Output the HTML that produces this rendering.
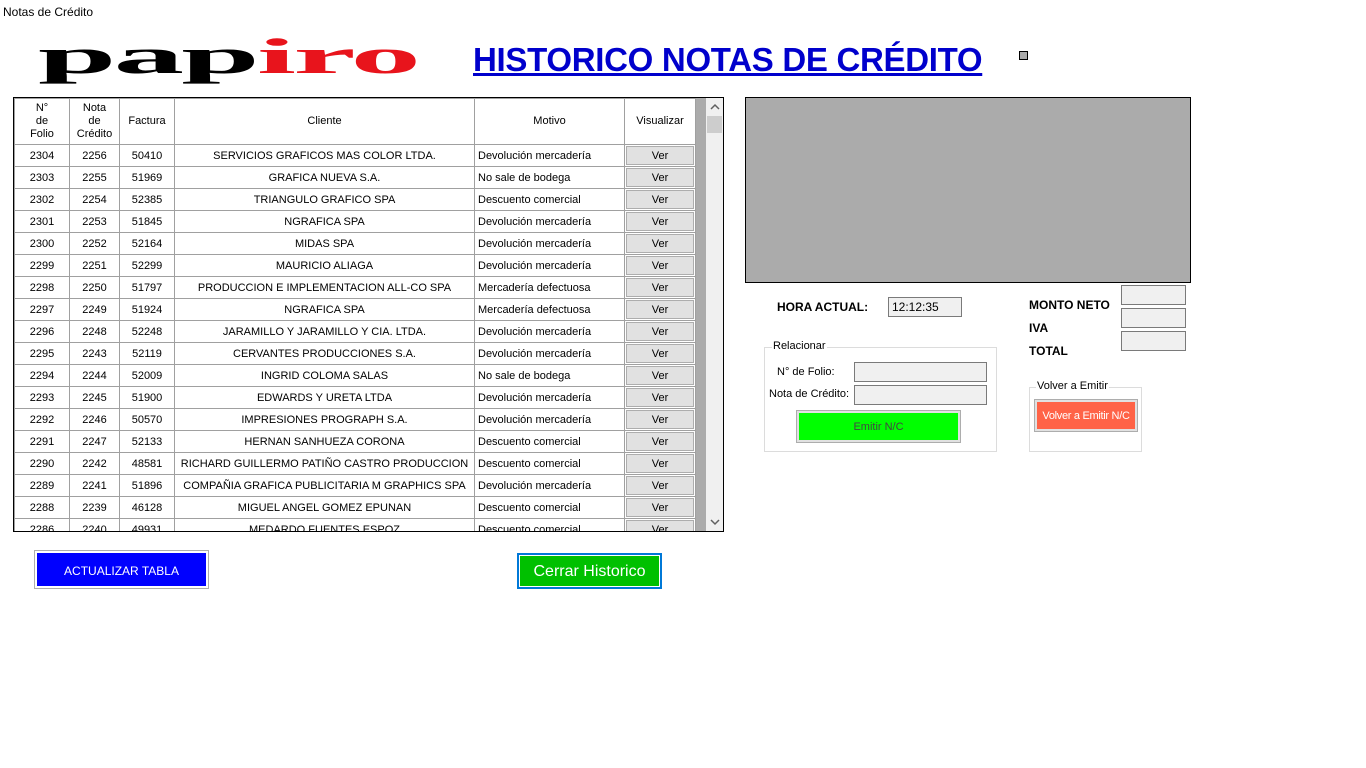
<!DOCTYPE html>
<html><head><meta charset="utf-8"><style>
body{margin:0;width:1366px;height:768px;background:#fff;position:relative;overflow:hidden;font-family:"Liberation Sans",sans-serif;font-size:11px;color:#000}
.a{position:absolute}
#grid{left:13px;top:97px;width:709px;height:433px;border:1px solid #000;overflow:hidden;background:#ababab}
table{border-collapse:collapse;position:absolute;left:0;top:0;table-layout:fixed;background:#fff}
td{border:1px solid #a0a0a0;height:20px;padding:1px 0 0 0;text-align:center;white-space:nowrap;overflow:hidden;font-size:11px;line-height:20px}
td.m{text-align:left;padding-left:3px}
td.b{padding-top:0;line-height:21px;height:21px}
th{border:1px solid #a0a0a0;font-weight:normal;height:45px;padding:0;font-size:11px;line-height:13px;background:#fff}
.v{display:block;margin:0 1px;height:17px;line-height:18px;background:#e1e1e1;border:1px solid #adadad}
.lbl{font-weight:bold;font-size:12px}
.tb{background:#f0f0f0;border:1px solid #7a7a7a;box-sizing:border-box}
.gb{border:1px solid #dcdcdc;box-sizing:border-box}
.gt{position:absolute;top:-8px;background:#fff;padding:0 1px;font-size:11px}
</style></head><body>
<div class="a" style="left:3px;top:5px;font-size:12px">Notas de Crédito</div>
<div class="a" style="left:38px;top:31px;font-family:'Liberation Serif',serif;font-weight:bold;font-size:50px;line-height:50px;transform:scaleX(2.82);transform-origin:0 0;letter-spacing:-1px;white-space:nowrap"><span>pap</span><span style="color:#e8141c">iro</span></div>
<div class="a" style="left:473px;top:41px;font-weight:bold;font-size:33px;color:#0000cc;text-decoration:underline;letter-spacing:-0.3px">HISTORICO NOTAS DE CRÉDITO</div>
<div class="a" style="left:1019px;top:51px;width:7px;height:7px;background:#ababab;border:1px solid #000"></div>

<div class="a" id="grid">
<table style="width:681px">
<colgroup><col style="width:55px"><col style="width:50px"><col style="width:55px"><col style="width:300px"><col style="width:150px"><col style="width:71px"></colgroup>
<tr><th>N°<br>de<br>Folio</th><th>Nota<br>de<br>Crédito</th><th>Factura</th><th>Cliente</th><th>Motivo</th><th>Visualizar</th></tr>
<tr><td>2304</td><td>2256</td><td>50410</td><td>SERVICIOS GRAFICOS MAS COLOR LTDA.</td><td class="m">Devolución mercadería</td><td class="b"><span class="v">Ver</span></td></tr>
<tr><td>2303</td><td>2255</td><td>51969</td><td>GRAFICA NUEVA S.A.</td><td class="m">No sale de bodega</td><td class="b"><span class="v">Ver</span></td></tr>
<tr><td>2302</td><td>2254</td><td>52385</td><td>TRIANGULO GRAFICO SPA</td><td class="m">Descuento comercial</td><td class="b"><span class="v">Ver</span></td></tr>
<tr><td>2301</td><td>2253</td><td>51845</td><td>NGRAFICA SPA</td><td class="m">Devolución mercadería</td><td class="b"><span class="v">Ver</span></td></tr>
<tr><td>2300</td><td>2252</td><td>52164</td><td>MIDAS SPA</td><td class="m">Devolución mercadería</td><td class="b"><span class="v">Ver</span></td></tr>
<tr><td>2299</td><td>2251</td><td>52299</td><td>MAURICIO ALIAGA</td><td class="m">Devolución mercadería</td><td class="b"><span class="v">Ver</span></td></tr>
<tr><td>2298</td><td>2250</td><td>51797</td><td>PRODUCCION E IMPLEMENTACION ALL-CO SPA</td><td class="m">Mercadería defectuosa</td><td class="b"><span class="v">Ver</span></td></tr>
<tr><td>2297</td><td>2249</td><td>51924</td><td>NGRAFICA SPA</td><td class="m">Mercadería defectuosa</td><td class="b"><span class="v">Ver</span></td></tr>
<tr><td>2296</td><td>2248</td><td>52248</td><td>JARAMILLO Y JARAMILLO Y CIA. LTDA.</td><td class="m">Devolución mercadería</td><td class="b"><span class="v">Ver</span></td></tr>
<tr><td>2295</td><td>2243</td><td>52119</td><td>CERVANTES PRODUCCIONES S.A.</td><td class="m">Devolución mercadería</td><td class="b"><span class="v">Ver</span></td></tr>
<tr><td>2294</td><td>2244</td><td>52009</td><td>INGRID COLOMA SALAS</td><td class="m">No sale de bodega</td><td class="b"><span class="v">Ver</span></td></tr>
<tr><td>2293</td><td>2245</td><td>51900</td><td>EDWARDS Y URETA LTDA</td><td class="m">Devolución mercadería</td><td class="b"><span class="v">Ver</span></td></tr>
<tr><td>2292</td><td>2246</td><td>50570</td><td>IMPRESIONES PROGRAPH S.A.</td><td class="m">Devolución mercadería</td><td class="b"><span class="v">Ver</span></td></tr>
<tr><td>2291</td><td>2247</td><td>52133</td><td>HERNAN SANHUEZA CORONA</td><td class="m">Descuento comercial</td><td class="b"><span class="v">Ver</span></td></tr>
<tr><td>2290</td><td>2242</td><td>48581</td><td>RICHARD GUILLERMO PATIÑO CASTRO PRODUCCION</td><td class="m">Descuento comercial</td><td class="b"><span class="v">Ver</span></td></tr>
<tr><td>2289</td><td>2241</td><td>51896</td><td>COMPAÑIA GRAFICA PUBLICITARIA M GRAPHICS SPA</td><td class="m">Devolución mercadería</td><td class="b"><span class="v">Ver</span></td></tr>
<tr><td>2288</td><td>2239</td><td>46128</td><td>MIGUEL ANGEL GOMEZ EPUNAN</td><td class="m">Descuento comercial</td><td class="b"><span class="v">Ver</span></td></tr>
<tr><td>2286</td><td>2240</td><td>49931</td><td>MEDARDO FUENTES ESPOZ</td><td class="m">Descuento comercial</td><td class="b"><span class="v">Ver</span></td></tr>
</table>
<div class="a" style="left:692px;top:0;width:17px;height:433px;background:#f0f0f0"></div>
<div class="a" style="left:693px;top:18px;width:15px;height:17px;background:#cdcdcd"></div>
<svg class="a" style="left:696px;top:5px" width="10" height="8"><path d="M1 6 L5 2 L9 6" stroke="#606060" stroke-width="1.5" fill="none"/></svg>
<svg class="a" style="left:696px;top:420px" width="10" height="8"><path d="M1 2 L5 6 L9 2" stroke="#606060" stroke-width="1.5" fill="none"/></svg>
</div>

<div class="a" style="left:34px;top:550px;width:175px;height:39px;border:1px solid #adadad;box-sizing:border-box;padding:2px"><div style="background:#0000ff;color:#fff;height:33px;line-height:37px;text-align:center;font-size:12px">ACTUALIZAR TABLA</div></div>
<div class="a" style="left:517px;top:553px;width:145px;height:36px;border:2px solid #0078d7;box-sizing:border-box;padding:1px"><div style="background:#00c000;color:#fff;height:30px;line-height:32px;text-align:center;font-size:16px">Cerrar Historico</div></div>

<div class="a" style="left:745px;top:97px;width:446px;height:186px;background:#ababab;border:1px solid #000;box-sizing:border-box"></div>

<div class="a lbl" style="left:777px;top:300px">HORA ACTUAL:</div>
<div class="a tb" style="left:888px;top:297px;width:74px;height:20px;padding-left:3px;line-height:18px;font-size:12px">12:12:35</div>

<div class="a lbl" style="left:1029px;top:298px">MONTO NETO</div>
<div class="a lbl" style="left:1029px;top:321px">IVA</div>
<div class="a lbl" style="left:1029px;top:344px">TOTAL</div>
<div class="a tb" style="left:1121px;top:285px;width:65px;height:20px"></div>
<div class="a tb" style="left:1121px;top:308px;width:65px;height:20px"></div>
<div class="a tb" style="left:1121px;top:331px;width:65px;height:20px"></div>

<div class="a gb" style="left:764px;top:347px;width:233px;height:105px"><span class="gt" style="left:7px">Relacionar</span></div>
<div class="a" style="left:777px;top:366px">N° de Folio:</div>
<div class="a" style="left:769px;top:388px">Nota de Crédito:</div>
<div class="a tb" style="left:854px;top:362px;width:133px;height:20px"></div>
<div class="a tb" style="left:854px;top:385px;width:133px;height:20px"></div>
<div class="a" style="left:796px;top:410px;width:165px;height:33px;border:1px solid #adadad;box-sizing:border-box;padding:2px;background:#e1e1e1"><div style="background:#00ff00;color:#444;height:27px;line-height:29px;text-align:center">Emitir N/C</div></div>

<div class="a gb" style="left:1029px;top:387px;width:113px;height:65px"><span class="gt" style="left:6px">Volver a Emitir</span></div>
<div class="a" style="left:1034px;top:399px;width:104px;height:33px;border:1px solid #adadad;box-sizing:border-box;padding:2px;background:#e1e1e1"><div style="background:#ff6347;color:#fff;height:27px;line-height:29px;text-align:center;white-space:nowrap;font-size:11px;letter-spacing:-0.3px">Volver a Emitir N/C</div></div>
</body></html>
